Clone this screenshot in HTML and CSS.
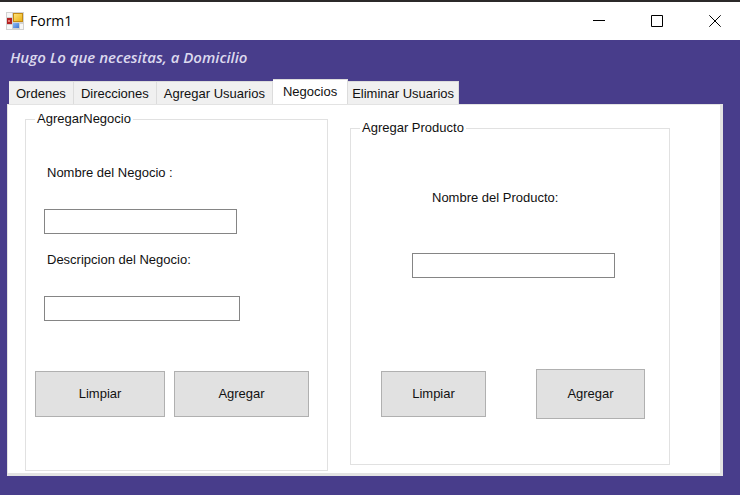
FILE: index.html
```html
<!DOCTYPE html>
<html lang="es">
<head>
<meta charset="utf-8">
<title>Form1</title>
<link rel="stylesheet" href="styles.css">
</head>
<body>
<header class="titlebar">
  <svg class="app-icon" width="18" height="18" viewBox="0 0 18 18" aria-hidden="true">
    <defs>
      <linearGradient id="gold" x1="0" y1="0" x2="1" y2="1"><stop offset="0" stop-color="#ffe680"/><stop offset="1" stop-color="#e9ae10"/></linearGradient>
      <linearGradient id="blue" x1="0" y1="0" x2="1" y2="1"><stop offset="0" stop-color="#8fbcf5"/><stop offset="1" stop-color="#3f76d4"/></linearGradient>
    </defs>
    <rect width="18" height="18" fill="#d2d2d2"/>
    <path d="M1 1h5v4H1zM1 13h5v4H1zM14 12h3v5h-3z" fill="#f7f7f7"/>
    <rect x="1" y="6" width="5" height="6" fill="#b42222"/>
    <rect x="2" y="8" width="2" height="2" fill="#e87b72"/>
    <rect x="7.5" y="1.500" width="9" height="8" fill="url(#gold)" stroke="#c48a12"/>
    <rect x="7" y="11" width="6" height="5" fill="url(#blue)"/>
  </svg>
  <span class="window-title">Form1</span>
  <div class="window-controls">
    <button type="button" class="window-button" aria-label="Minimizar"><svg width="12" height="12" viewBox="0 0 12 12"><path d="M0 5.500h12"/></svg></button>
    <button type="button" class="window-button" aria-label="Maximizar"><svg width="12" height="12" viewBox="0 0 12 12"><path d="M.5.5h11v11H.5z"/></svg></button>
    <button type="button" class="window-button" aria-label="Cerrar"><svg width="12" height="12" viewBox="0 0 12 12"><path d="M.3.3l11.400 11.400M11.700.3L.3 11.700"/></svg></button>
  </div>
</header>
<main class="form">
  <h1 class="slogan">Hugo Lo que necesitas, a Domicilio</h1>
  <div class="tabs" role="tablist">
    <button type="button" class="tab" role="tab">Ordenes</button>
    <button type="button" class="tab" role="tab">Direcciones</button>
    <button type="button" class="tab" role="tab">Agregar Usuarios</button>
    <button type="button" class="tab tab-selected" role="tab" aria-selected="true">Negocios</button>
    <button type="button" class="tab" role="tab">Eliminar Usuarios</button>
  </div>
  <section class="panel" role="tabpanel">
    <fieldset class="group">
      <legend>AgregarNegocio</legend>
      <div class="fields">
        <label for="business-name">Nombre del Negocio :</label>
        <input id="business-name" type="text">
        <label for="business-description">Descripcion del Negocio:</label>
        <input id="business-description" class="input-wide" type="text">
      </div>
      <div class="actions">
        <button type="button" class="action">Limpiar</button>
        <button type="button" class="action action-wide">Agregar</button>
      </div>
    </fieldset>
    <fieldset class="group group-product">
      <legend>Agregar Producto</legend>
      <div class="fields">
        <label for="product-name">Nombre del Producto:</label>
        <input id="product-name" type="text">
      </div>
      <div class="actions">
        <button type="button" class="action">Limpiar</button>
        <button type="button" class="action action-wide action-tall">Agregar</button>
      </div>
    </fieldset>
  </section>
</main>
</body>
</html>
```
FILE: styles.css
```css
* {
  box-sizing: border-box;
}

body {
  margin: 0;
  min-height: 100vh;
  display: flex;
  flex-direction: column;
  background: #483d8b;
  color: #111;
  font: 13px/20px "Liberation Sans", Arial, sans-serif;
}

button,
input {
  font: inherit;
  color: inherit;
  border-radius: 0;
}

.titlebar {
  display: flex;
  align-items: center;
  height: 40px;
  padding-left: 6px;
  border-top: 2px solid #2b2929;
  background: #fff;
}

.window-title {
  margin-left: 6px;
  color: #000;
  font: 14px/20px "Open Sans", "Segoe UI", sans-serif;
}

.window-controls {
  display: flex;
  align-self: stretch;
  margin-left: auto;
  margin-right: -4px;
}

.window-button {
  display: flex;
  align-items: center;
  justify-content: center;
  width: 58px;
  padding: 0;
  border: 0;
  background: none;
}

.window-button svg {
  fill: none;
  stroke: #000;
}

.form {
  padding: 7px 17px 19px 7px;
}

.slogan {
  margin: 0 0 12px 3px;
  color: #dcd9ee;
  font: italic 600 15px/20px "Open Sans", "Segoe UI", sans-serif;
}

.tabs {
  display: flex;
  align-items: flex-end;
  padding-left: 2px;
}

.tab {
  height: 23px;
  padding: 2px 7px 0;
  border: 1px solid #dcdcdc;
  border-width: 1px 1px 0 0;
  background: #f0f0f0;
  white-space: nowrap;
}

.tab-selected {
  height: 25px;
  padding: 0 10px;
  background: #fff;
}

.tab:last-child {
  padding: 2px 4px 0;
}

.panel {
  display: grid;
  grid-template-columns: 303fr 320fr;
  align-items: start;
  gap: 22px;
  padding: 5px 50px 2px 17px;
  border: solid #e3e3e3;
  border-width: 1px 3px 3px 1px;
  background: #fff;
}

.group {
  min-width: 0;
  margin: 0;
  padding: 35px 18px 53px 9px;
  border: 1px solid #e1e1e1;
}

.group legend {
  padding: 0 2px;
  line-height: 18px;
}

.fields {
  display: flex;
  flex-direction: column;
  padding-left: 9px;
}

.fields label {
  margin-left: 3px;
}

.fields input {
  width: 73%;
  height: 25px;
  margin: 26px 0 16px;
  border: 1px solid #858585;
  background: #fff;
}

.fields .input-wide {
  width: 74%;
}

.actions {
  display: flex;
  align-items: center;
  gap: 9px;
  margin-top: 34px;
}

.action {
  flex: 130;
  height: 46px;
  padding: 0;
  border: 1px solid #b0b0b0;
  background: #e1e1e1;
}

.action-wide {
  flex-grow: 135;
}

.group-product {
  margin-top: 9px;
  padding: 51px 24px 45px 30px;
}

.group-product legend {
  margin-left: -21px;
}

.group-product .fields {
  padding-left: 31px;
}

.group-product .fields label {
  margin-left: 20px;
}

.group-product .fields input {
  width: 87%;
  margin: 45px 0 16px;
}

.group-product .actions {
  gap: 50px;
  margin-top: 75px;
}

.action-tall {
  height: 50px;
}
```
